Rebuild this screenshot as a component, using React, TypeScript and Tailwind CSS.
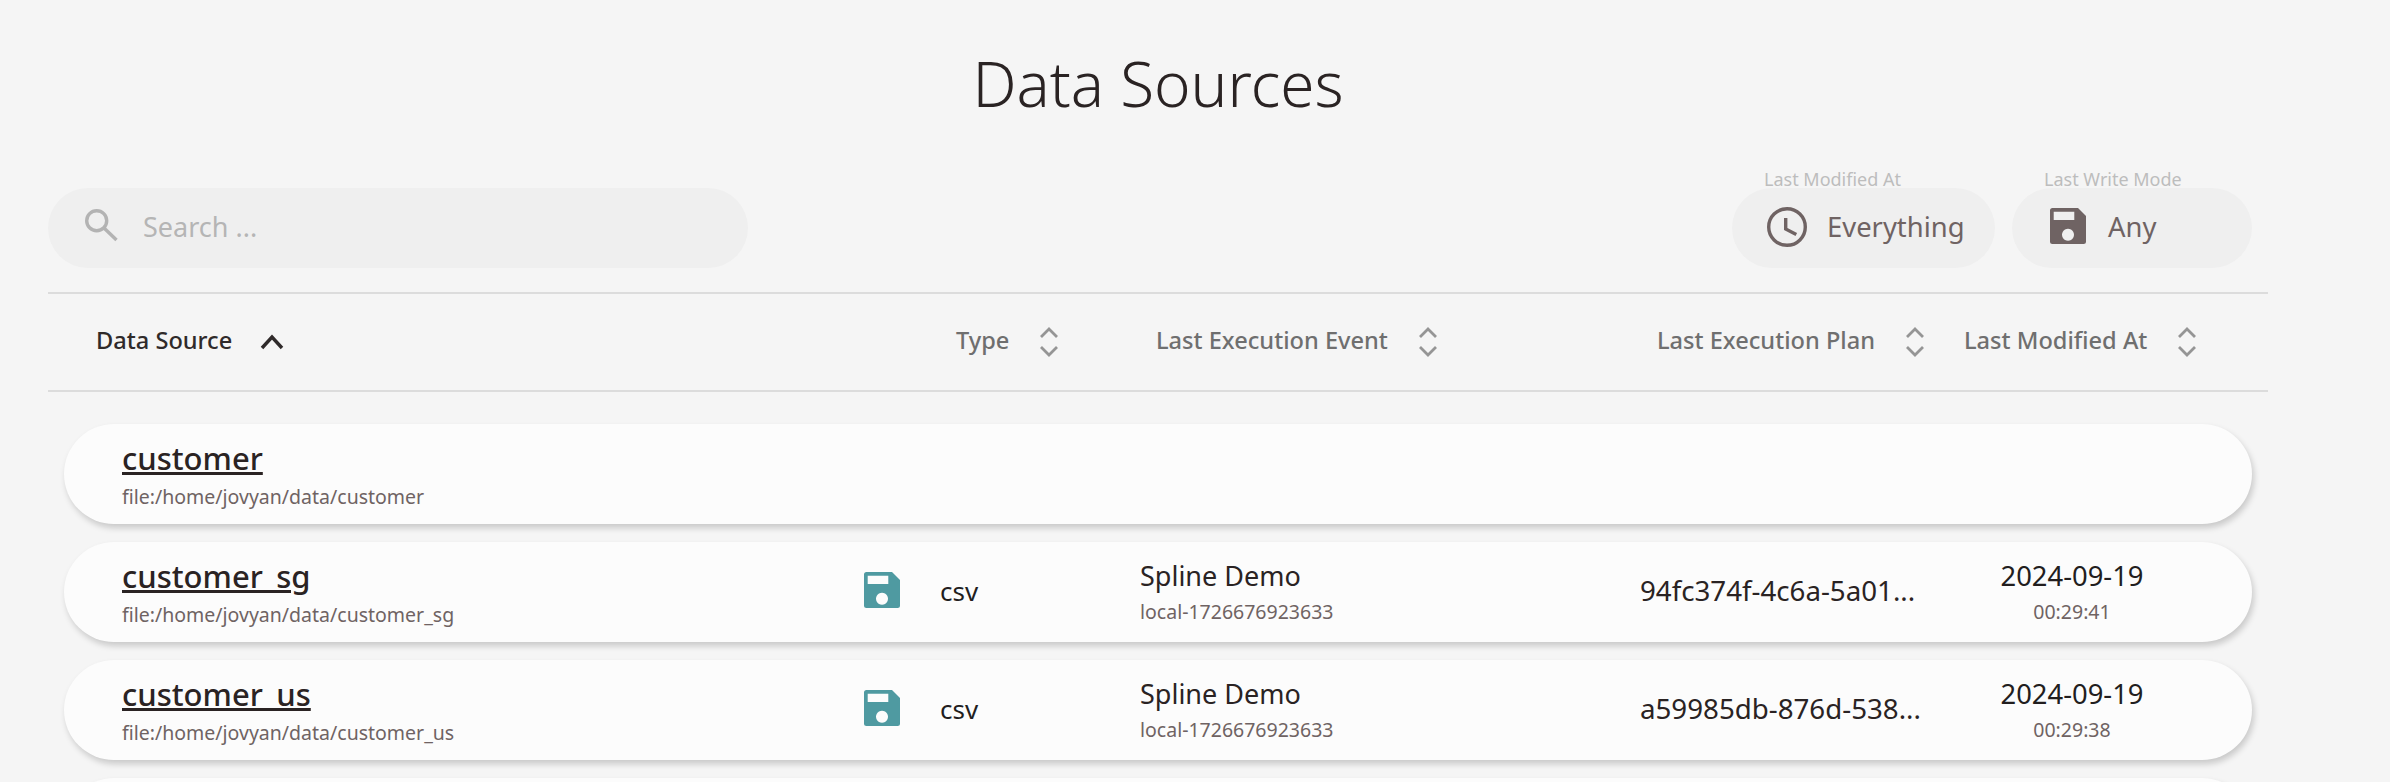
import React from "react";

function Floppy({ className }: { className: string }) {
  return (
    <svg viewBox="0 0 36 36" className={className} fill="currentColor">
      <path fillRule="evenodd" d="M2.5 0H28L36 8V33.5a2.5 2.5 0 0 1-2.5 2.5H2.5A2.5 2.5 0 0 1 0 33.5V2.5A2.5 2.5 0 0 1 2.5 0ZM3.7 3.7V12H24.3V3.7ZM18 20.7a6 6 0 1 0 .01 0Z" />
    </svg>
  );
}

function Sort({ active }: { active?: boolean }) {
  if (active)
    return (
      <svg viewBox="0 0 24 16" className="w-[24px] h-[16px] text-[#2f2a2a]" fill="none" stroke="currentColor" strokeWidth="3.4">
        <path d="M2 14 12 3l10 11" />
      </svg>
    );
  return (
    <svg viewBox="0 0 20 30" className="w-[20px] h-[30px] text-[#959595]" fill="none" stroke="currentColor" strokeWidth="2.8">
      <path d="M2 10 10 2l8 8M2 20l8 8 8-8" />
    </svg>
  );
}

function HeadCell({ label, w, pad, active }: { label: string; w: string; pad: string; active?: boolean }) {
  return (
    <div className={`${w} ${pad} shrink-0 flex items-center ${active ? "gap-[28px] text-[#2f2a2a]" : "gap-[30px] text-[#6f6f6f]"} text-[23.6px] font-medium`}>
      <span className="pb-[3px]">{label}</span>
      <Sort active={active} />
    </div>
  );
}

function Row({ name, path, ev, evId, plan, date, time }: { name: string; path: string; ev?: string; evId?: string; plan?: string; date?: string; time?: string }) {
  return (
    <div className="h-[100px] rounded-[50px] bg-[#fcfcfc] shadow-[2px_4px_6px_rgba(0,0,0,0.18)] flex items-center shrink-0">
      <div className="w-[800px] pl-[58px] shrink-0">
        <div className="text-[31px] leading-[38px] font-medium underline text-[#2a2323]">{name}</div>
        <div className="text-[19.5px] leading-[26px] mt-[7px] text-[#6f6363]">{path}</div>
      </div>
      {ev && (
        <>
          <div className="w-[76px] shrink-0">
            <Floppy className="w-[36px] h-[36px] mb-[4px] text-[#4f9aa1]" />
          </div>
          <div className="w-[200px] shrink-0 text-[26px] pb-[2px] text-[#221e1e]">csv</div>
          <div className="w-[500px] shrink-0">
            <div className="text-[27px] leading-[34px] pb-[1px] text-[#2a2323]">{ev}</div>
            <div className="text-[19.5px] leading-[26px] mt-[5px] text-[#6f6363]">{evId}</div>
          </div>
          <div className="w-[340px] shrink-0 text-[27.7px] pb-[2px] text-[#2a2323] whitespace-nowrap">{plan}</div>
          <div className="w-[184px] shrink-0 text-center">
            <div className="text-[27.4px] leading-[34px] pb-[1px] text-[#221e1e]">{date}</div>
            <div className="text-[19.5px] leading-[26px] mt-[5px] text-[#6f6363]">{time}</div>
          </div>
        </>
      )}
    </div>
  );
}

export default function App() {
  return (
    <div className="h-screen overflow-hidden bg-[#f5f5f5] pl-[48px] pr-[122px] font-['Noto_Sans',sans-serif]">
      <h1 className="h-[172px] pt-[41px] text-center text-[62px] leading-[84px] font-light text-[#2a2323]">Data Sources</h1>

      <div className="flex items-end justify-between pr-[16px] h-[96px]">
        <div className="w-[700px] h-[80px] rounded-[40px] bg-[#efefef] flex items-center pl-[36px] gap-[25px]">
          <svg viewBox="0 0 34 34" className="w-[34px] h-[34px] mb-[6px] text-[#b3b3b3]" fill="none" stroke="currentColor" strokeWidth="3.4">
            <circle cx="12.7" cy="12.7" r="10" />
            <path d="m20 20 12.5 12" />
          </svg>
          <span className="text-[27px] pb-[2px] text-[#b5b5b5]">Search ...</span>
        </div>
        <div className="flex gap-[17px]">
          <div className="relative w-[263px] h-[80px] rounded-[40px] bg-[#efefef] flex items-center pl-[35px] gap-[20px] text-[27.4px] text-[#6f6363]">
            <span className="absolute left-[32px] -top-[18px] text-[18px] leading-[18px] text-[#bdbdbd]">Last Modified At</span>
            <svg viewBox="0 0 40 40" className="w-[40px] h-[40px] mb-[2px]" fill="none" stroke="currentColor" strokeWidth="3.4">
              <circle cx="20" cy="20" r="18.3" />
              <path d="M18.7 11v11l10.6 5.5" />
            </svg>
            <span className="pb-[2px]">Everything</span>
          </div>
          <div className="relative w-[240px] h-[80px] rounded-[40px] bg-[#efefef] flex items-center pl-[38px] gap-[22px] text-[27.4px] text-[#6f6363]">
            <span className="absolute left-[32px] -top-[18px] text-[18px] leading-[18px] text-[#bdbdbd]">Last Write Mode</span>
            <Floppy className="w-[36px] h-[36px] mb-[4px]" />
            <span className="pb-[2px]">Any</span>
          </div>
        </div>
      </div>

      <div className="mt-[24px] h-[100px] border-y-2 border-[#dcdcdc] flex items-center">
        <HeadCell label="Data Source" w="w-[908px]" pad="pl-[48px]" active />
        <HeadCell label="Type" w="w-[200px]" pad="" />
        <HeadCell label="Last Execution Event" w="w-[501px]" pad="" />
        <HeadCell label="Last Execution Plan" w="w-[307px]" pad="" />
        <HeadCell label="Last Modified At" w="w-[300px]" pad="" />
      </div>

      <div className="mt-[32px] px-[16px] flex flex-col gap-[18px]">
        <Row name="customer" path="file:/home/jovyan/data/customer" />
        <Row name="customer_sg" path="file:/home/jovyan/data/customer_sg" ev="Spline Demo" evId="local-1726676923633" plan="94fc374f-4c6a-5a01..." date="2024-09-19" time="00:29:41" />
        <Row name="customer_us" path="file:/home/jovyan/data/customer_us" ev="Spline Demo" evId="local-1726676923633" plan="a59985db-876d-538..." date="2024-09-19" time="00:29:38" />
        <Row name="" path="" />
      </div>
    </div>
  );
}
